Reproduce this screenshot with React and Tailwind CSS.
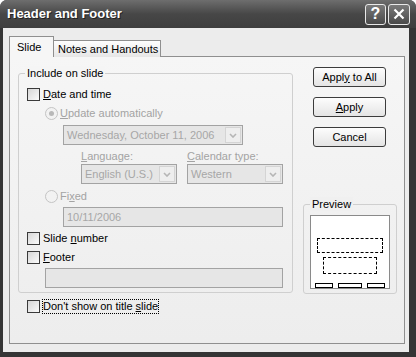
import React from "react";

const font = { fontFamily: '"Liberation Sans", Arial, sans-serif' };

const Key = ({ children }) => <span className="underline underline-offset-[1px]">{children}</span>;

const Checkbox = ({ children, focus }) => (
  <div className="flex h-[16px] items-center">
    <span className="h-[13px] w-[13px] shrink-0 border border-[#3a3a3a] bg-gradient-to-br from-[#d6d6d6] to-[#fbfbfb]" />
    <span
      className={
        focus
          ? "ml-[2px] border border-dotted border-black leading-[13px] text-black"
          : "ml-[3px] leading-[14px] text-black"
      }
    >
      {children}
    </span>
  </div>
);

const Radio = ({ children, dot }) => (
  <div className="flex h-[16px] items-center">
    <span className="flex h-[13px] w-[13px] shrink-0 items-center justify-center rounded-full border border-[#c4c4c4] bg-[#f2f2f2]">
      {dot && <span className="h-[5px] w-[5px] rounded-full bg-[#b8b8b8]" />}
    </span>
    <span className="ml-[2px] leading-[14px] text-[#a3a3a3]">{children}</span>
  </div>
);

const Arrow = () => (
  <span className="mr-[1px] flex h-[16px] w-[16px] items-center justify-center border border-[#d4d4d4] bg-[#eeeeee]">
    <svg width="8" height="5" viewBox="0 0 8 5">
      <path d="M1 1 L4 4 L7 1" fill="none" stroke="#b5b5b5" strokeWidth="1.6" />
    </svg>
  </span>
);

const Dropdown = ({ w, children }) => (
  <div
    className={`flex h-[20px] items-center justify-between border border-[#a3a3a3] bg-[#e6e6e6] pl-[3px] text-[#a6a6a6] ${w}`}
  >
    <span className="whitespace-nowrap leading-[14px]">{children}</span>
    <Arrow />
  </div>
);

const Button = ({ children }) => (
  <button className="flex h-[20px] w-[73px] items-center justify-center rounded-[3px] border border-[#3c3c3c] bg-gradient-to-b from-[#fdfdfd] to-[#e4e4e4] text-black">
    <span>{children}</span>
  </button>
);

export default function App() {
  return (
    <div style={font} className="flex h-[357px] w-[416px] flex-col overflow-hidden rounded-t-[7px] bg-[#353535] text-[11px]">
      {/* title bar */}
      <div className="flex h-[28px] shrink-0 items-center bg-gradient-to-b from-[#6e6e6e] via-[#474747] to-[#3e3e3e] pl-[7px] pr-[6px]">
        <span className="text-[13px] font-bold text-white [text-shadow:1px_1px_0_#222]">Header and Footer</span>
        <div className="ml-auto flex gap-[2px]">
          <span className="flex h-[21px] w-[21px] items-center justify-center rounded-[3px] border border-[#e8e8e8] bg-gradient-to-b from-[#7a7a7a] to-[#4a4a4a] text-[16px] font-bold leading-none text-white">
            ?
          </span>
          <span className="flex h-[21px] w-[22px] items-center justify-center rounded-[3px] border border-[#e8e8e8] bg-gradient-to-b from-[#7a7a7a] to-[#4a4a4a]">
            <svg width="12" height="12" viewBox="0 0 12 12">
              <path d="M1.5 1.5 L10.5 10.5 M10.5 1.5 L1.5 10.5" stroke="white" strokeWidth="2.2" />
            </svg>
          </span>
        </div>
      </div>

      {/* body */}
      <div className="mb-[5px] ml-[3px] mr-[7px] flex-1 bg-[#ececec] pl-[6px] pt-[8px]">
        <div className="relative z-10 -mb-px flex items-end">
          <div className="flex h-[21px] w-[45px] items-center border border-b-0 border-[#8f8f8f] bg-[#f6f6f6] pl-[7px] text-black">
            Slide
          </div>
          <div className="flex h-[17px] w-[107px] items-center whitespace-nowrap border border-b-0 border-l-0 border-[#8f8f8f] bg-gradient-to-b from-[#fefefe] to-[#e6e6e6] pl-[4px] text-black">
            Notes and Handouts
          </div>
        </div>

        <div className="flex h-[288px] w-[396px] border border-[#8f8f8f] bg-gradient-to-b from-[#f6f6f6] to-[#ededed]">
          {/* left column */}
          <div className="ml-[8px] w-[275px]">
            <div className="relative mt-[16px] rounded-[3px] border border-[#cfcfcf] pb-[4px] pl-[8px]">
              <span className="absolute -top-[8px] left-[6px] bg-[#f5f5f5] px-[2px] leading-[14px] text-black">
                Include on slide
              </span>
              <div className="mt-[12px]">
                <Checkbox>
                  <Key>D</Key>ate and time
                </Checkbox>
              </div>
              <div className="ml-[18px] mt-[3px]">
                <Radio dot>
                  <Key>U</Key>pdate automatically
                </Radio>
              </div>
              <div className="ml-[36px] mt-[4px]">
                <Dropdown w="w-[180px]">Wednesday, October 11, 2006</Dropdown>
              </div>
              <div className="ml-[54px] mt-[4px] flex h-[14px] text-[#a3a3a3]">
                <span className="w-[106px] leading-[14px]">
                  <Key>L</Key>anguage:
                </span>
                <span className="leading-[14px]">
                  <Key>C</Key>alendar type:
                </span>
              </div>
              <div className="ml-[54px] mt-[1px] flex gap-[10px]">
                <Dropdown w="w-[96px]">English (U.S.)</Dropdown>
                <Dropdown w="w-[96px]">Western</Dropdown>
              </div>
              <div className="ml-[18px] mt-[4px]">
                <Radio>
                  Fi<Key>x</Key>ed
                </Radio>
              </div>
              <div className="ml-[36px] mt-[3px] flex h-[20px] w-[220px] items-center border border-[#a3a3a3] bg-[#e6e6e6] pl-[3px] text-[#a6a6a6]">
                10/11/2006
              </div>
              <div className="mt-[3px]">
                <Checkbox>
                  Slide <Key>n</Key>umber
                </Checkbox>
              </div>
              <div className="mt-[3px]">
                <Checkbox>
                  <Key>F</Key>ooter
                </Checkbox>
              </div>
              <div className="ml-[18px] mt-[3px] h-[20px] w-[238px] border border-[#a3a3a3] bg-[#e6e6e6]" />
            </div>
            <div className="ml-[9px] mt-[5px]">
              <Checkbox focus>
                Don't show on title <Key>s</Key>lide
              </Checkbox>
            </div>
          </div>

          {/* right column */}
          <div className="ml-[10px] flex flex-col">
            <div className="ml-[10px] mt-[10px] flex flex-col gap-[10px]">
              <Button>
                Appl<Key>y</Key> to All
              </Button>
              <Button>
                <Key>A</Key>pply
              </Button>
              <Button>Cancel</Button>
            </div>
            <div className="relative mt-[57px] h-[90px] w-[94px] rounded-[3px] border border-[#cfcfcf] pl-[6px] pt-[10px]">
              <span className="absolute -top-[8px] left-[6px] bg-[#f0f0f0] px-[2px] leading-[14px] text-black">
                Preview
              </span>
              <div className="flex h-[74px] w-[80px] flex-col border border-[#8a8a8a] bg-white pt-[22px]">
                <div className="ml-[6px] h-[15px] w-[66px] border border-dashed border-black" />
                <div className="ml-[12px] mt-[4px] h-[17px] w-[54px] border border-dashed border-black" />
                <div className="ml-[4px] mt-[9px] flex gap-[5px]">
                  <span className="h-[5px] w-[18px] border border-black" />
                  <span className="h-[5px] w-[24px] border border-black" />
                  <span className="h-[5px] w-[18px] border border-black" />
                </div>
              </div>
            </div>
          </div>
        </div>
      </div>
    </div>
  );
}
